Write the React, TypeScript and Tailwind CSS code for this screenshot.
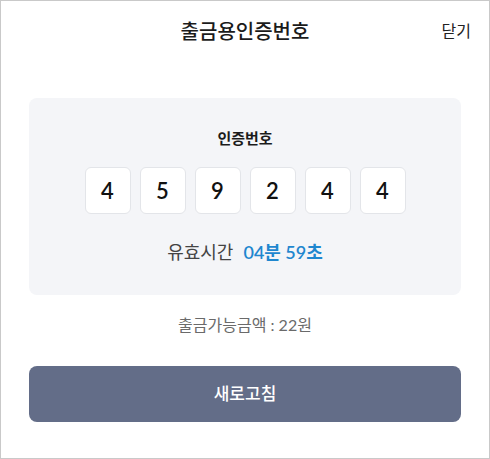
import * as React from "react";

const digits = ["4", "5", "9", "2", "4", "4"];

export default function App() {
  return (
    <div
      className="w-[490px] h-[459px] bg-white border border-[#c9c9c9] text-[#222]"
      style={{ fontFamily: '"Lato", "Noto Sans CJK KR", sans-serif' }}
    >
      {/* Header */}
      <div className="relative h-[60px] flex items-center justify-center">
        <h1 className="text-[20px] font-medium text-[#1b1b1b] leading-none">
          출금용인증번호
        </h1>
        <button className="absolute right-[18px] top-[20px] text-[16px] leading-[20px] text-[#222]">
          닫기
        </button>
      </div>

      <div className="px-[28px] pt-[37px]">
        {/* Code card */}
        <div className="h-[197px] rounded-lg bg-[#f4f5f8] flex flex-col items-center pt-[29px]">
          <p className="text-[15px] font-bold leading-[22px] text-[#1b1b1b]">
            인증번호
          </p>
          <div className="mt-[18px] flex gap-[9px]">
            {digits.map((d, i) => (
              <div
                key={i}
                className="w-[46px] h-[47px] rounded-md bg-white border border-[#e3e5e9] flex items-center justify-center text-[22px] font-semibold text-[#111]"
              >
                {d}
              </div>
            ))}
          </div>
          <div className="mt-[26px] flex items-center gap-[10px] text-[18px] leading-[24px]">
            <span className="text-[#444]">유효시간</span>
            <span className="font-semibold text-[#1f87cf]">04분 59초</span>
          </div>
        </div>

        <p className="mt-[19px] text-center text-[16px] leading-[22px] text-[#6a6a6a]">
          출금가능금액 : 22원
        </p>

        <button className="mt-[30px] w-full h-[56px] rounded-lg bg-[#636d88] text-white text-[17px] font-medium">
          새로고침
        </button>
      </div>
    </div>
  );
}
